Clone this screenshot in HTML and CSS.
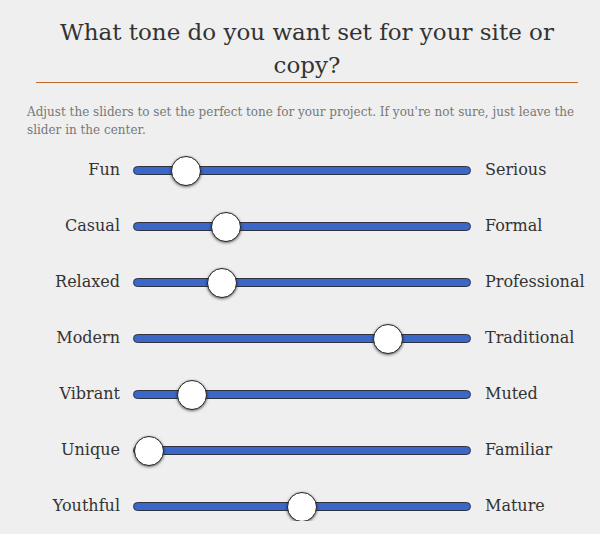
FILE: index.html
```html
<!DOCTYPE html>
<html lang="en">
<head>
    <meta charset="UTF-8">
    <title>Tone</title>
    <link rel="stylesheet" href="styles.css">
</head>
<body>
    <div class="tone">
        <h1 class="tone-title">What tone do you want set for your site or copy?</h1>
        <p class="tone-desc">Adjust the sliders to set the perfect tone for your project. If you're not sure, just leave the slider in the center.</p>

        <div class="sliders">
            <label class="left">Fun</label>
            <input type="range" min="0" max="100" value="12">
            <label class="right">Serious</label>

            <label class="left">Casual</label>
            <input type="range" min="0" max="100" value="25">
            <label class="right">Formal</label>

            <label class="left">Relaxed</label>
            <input type="range" min="0" max="100" value="24">
            <label class="right">Professional</label>

            <label class="left">Modern</label>
            <input type="range" min="0" max="100" value="78">
            <label class="right">Traditional</label>

            <label class="left">Vibrant</label>
            <input type="range" min="0" max="100" value="14">
            <label class="right">Muted</label>

            <label class="left">Unique</label>
            <input type="range" min="0" max="100" value="0">
            <label class="right">Familiar</label>

            <label class="left">Youthful</label>
            <input type="range" min="0" max="100" value="50">
            <label class="right">Mature</label>
        </div>
    </div>
</body>
</html>
```

FILE: styles.css
```css
body {
    margin: 0;
    background-color: #efefef;
    font-family: "DejaVu Serif", "Liberation Serif", serif;
    color: #333;
}
.tone {
    width: 560px;
    padding: 0 13px 0 27px;
}
.tone-title {
    margin: 16px 9px 0 9px;
    padding-bottom: 0;
    border-bottom: 1px solid #c06a30;
    text-align: center;
    font-weight: normal;
    font-size: 23px;
    line-height: 33px;
    color: #333;
}
.tone-desc {
    margin: 20px 0 0 0;
    font-size: 12px;
    line-height: 18px;
    color: #777;
}
.sliders {
    display: grid;
    grid-template-columns: 93px 338px auto;
    column-gap: 13px;
    row-gap: 26px;
    align-items: center;
    margin-top: 16px;
}
.sliders label {
    font-size: 16px;
    line-height: 30px;
}
.sliders .left {
    text-align: right;
}
.sliders .right {
    padding-left: 1px;
}
.sliders input[type=range] {
    -webkit-appearance: none;
    appearance: none;
    width: 338px;
    height: 30px;
    margin: 0;
    background: transparent;
}
.sliders input[type=range]::-webkit-slider-runnable-track {
    height: 9px;
    background-color: #3a67c8;
    border: 1px solid #2f3440;
    border-radius: 6px;
}
.sliders input[type=range]::-webkit-slider-thumb {
    -webkit-appearance: none;
    width: 30px;
    height: 30px;
    margin-top: -11px;
    border-radius: 50%;
    background-color: #fff;
    border: 1px solid #222;
    box-shadow: 0 1px 3px rgba(0, 0, 0, 0.6);
}
```
